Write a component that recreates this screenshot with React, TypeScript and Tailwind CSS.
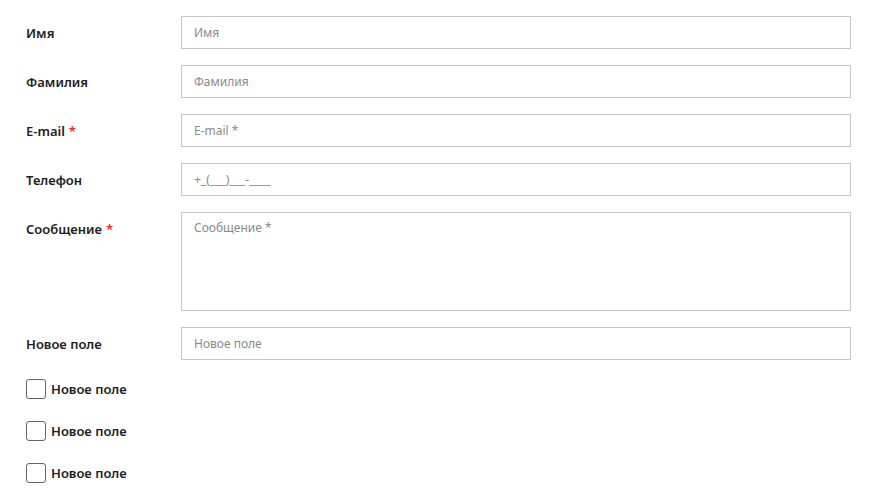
import React from 'react';

const fields = [
  { label: 'Имя', placeholder: 'Имя' },
  { label: 'Фамилия', placeholder: 'Фамилия' },
  { label: 'E-mail', placeholder: 'E-mail *', required: true },
  { label: 'Телефон', placeholder: '+_(___)___-____' },
];

function Label({ text, required }: { text: string; required?: boolean }) {
  return (
    <div className="w-[155px] shrink-0 pt-[9px] text-[13px] font-semibold leading-[16px] text-[#222]">
      {text}
      {required && <span className="ml-[4px] text-[#f22]">*</span>}
    </div>
  );
}

export default function App() {
  return (
    <div
      className="min-h-screen bg-white pl-[26px] pr-[20px] pt-[16px]"
      style={{ fontFamily: '"Noto Sans", "Open Sans", sans-serif' }}
    >
      <form className="flex flex-col gap-[16px]">
        {fields.map((f) => (
          <div key={f.label} className="flex">
            <Label text={f.label} required={f.required} />
            <input
              className="h-[33px] flex-1 border border-[#c6c6c6] px-[12px] text-[12px] text-[#333] outline-none placeholder:text-[#8a8a8a]"
              placeholder={f.placeholder}
            />
          </div>
        ))}
        <div className="flex">
          <Label text="Сообщение" required />
          <textarea
            className="h-[99px] flex-1 resize-none border border-[#c6c6c6] px-[12px] pt-[6px] text-[12px] text-[#333] outline-none placeholder:text-[#8a8a8a]"
            placeholder="Сообщение *"
          />
        </div>
        <div className="flex">
          <Label text="Новое поле" />
          <input
            className="h-[33px] flex-1 border border-[#c6c6c6] px-[12px] text-[12px] text-[#333] outline-none placeholder:text-[#8a8a8a]"
            placeholder="Новое поле"
          />
        </div>
      </form>
      <div className="mt-[19px] flex flex-col gap-[22px]">
        {[0, 1, 2].map((i) => (
          <label key={i} className="flex items-center gap-[5px]">
            <span className="h-[20px] w-[20px] rounded-[3px] border border-[#666]" />
            <span className="text-[13px] font-semibold leading-[16px] text-[#222]">Новое поле</span>
          </label>
        ))}
      </div>
    </div>
  );
}
